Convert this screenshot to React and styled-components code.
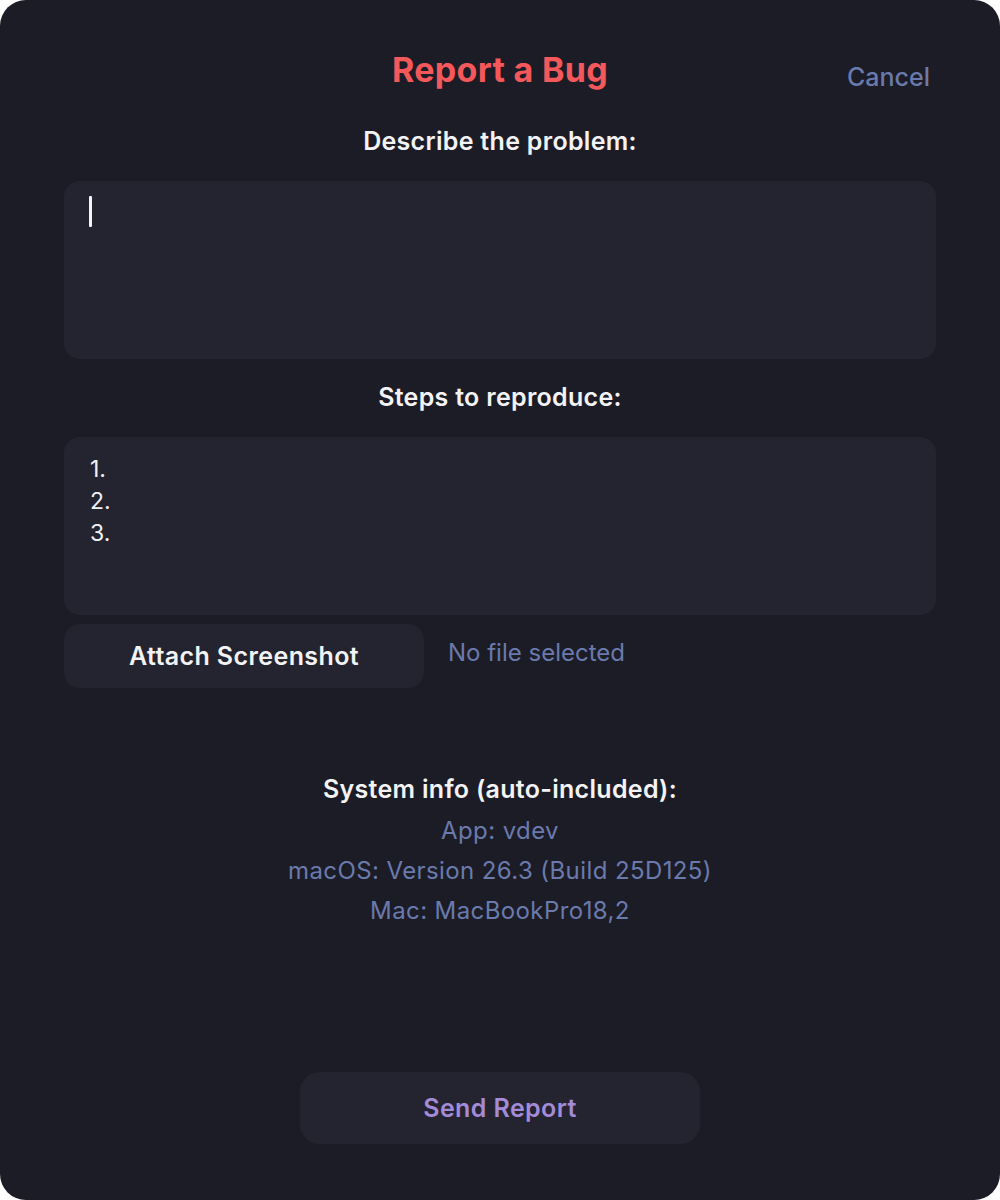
import React from "react";
import styled, { createGlobalStyle } from "styled-components";

const Global = createGlobalStyle`
  html, body { margin: 0; padding: 0; background: #ffffff; }
  body { font-family: Inter, "Noto Sans", "Liberation Sans", sans-serif; }
  * { box-sizing: border-box; }
`;

const Window = styled.div`
  width: 1000px;
  height: 1200px;
  background: #1c1c26;
  border-radius: 26px;
  padding: 48px 64px 0;
  display: flex;
  flex-direction: column;
  overflow: hidden;
`;

const Header = styled.div`
  display: grid;
  grid-template-columns: 1fr auto 1fr;
  align-items: center;
  height: 44px;
`;

const Title = styled.h1`
  grid-column: 2;
  margin: 0;
  font-size: 34px;
  font-weight: 700;
  line-height: 44px;
  color: #f5585b;
  letter-spacing: 0.3px;
`;

const CancelButton = styled.button`
  grid-column: 3;
  justify-self: end;
  margin: 14px 6px 0 0;
  padding: 0;
  border: none;
  background: none;
  font-family: inherit;
  font-size: 25px;
  font-weight: 500;
  color: #6a7aad;
  cursor: pointer;
`;

const Label = styled.div`
  text-align: center;
  font-size: 25px;
  font-weight: 600;
  line-height: 32px;
  letter-spacing: 0.3px;
  color: #f3f3f6;
  margin-top: ${(p) => p.$top}px;
`;

const Field = styled.div`
  margin-top: 24px;
  height: 178px;
  background: #242430;
  border-radius: 16px;
  padding: 16px 26px;
  font-size: 23px;
  line-height: 32px;
  color: #f0f0f4;
  white-space: pre-line;
`;

const Caret = styled.span`
  display: block;
  width: 3px;
  height: 31px;
  margin: -1px 0 0 -1px;
  background: #f4f4f7;
  border-radius: 1px;
`;

const AttachRow = styled.div`
  margin-top: 9px;
  display: flex;
  align-items: center;
  gap: 24px;
`;

const SoftButton = styled.button`
  width: ${(p) => p.$w}px;
  height: ${(p) => p.$h}px;
  border: none;
  border-radius: ${(p) => p.$r}px;
  background: #242430;
  font-family: inherit;
  font-size: 25px;
  font-weight: 600;
  letter-spacing: 0.4px;
  color: ${(p) => p.$color};
  cursor: pointer;
  padding: 0;
`;

const FileNote = styled.span`
  font-size: 24px;
  color: #6a7aad;
  margin-top: -8px;
`;

const InfoBlock = styled.div`
  margin-top: 85px;
  display: flex;
  flex-direction: column;
  align-items: center;
`;

const InfoTitle = styled.div`
  font-size: 25px;
  font-weight: 600;
  line-height: 32px;
  letter-spacing: 0.3px;
  color: #f3f3f6;
  margin-bottom: 6px;
`;

const InfoLine = styled.div`
  font-size: 24px;
  line-height: 40px;
  letter-spacing: 0.4px;
  color: #6a7aad;
`;

const Footer = styled.div`
  margin-top: 141px;
  display: flex;
  justify-content: center;
`;

export default function App() {
  return (
    <>
      <Global />
      <Window>
        <Header>
          <Title>Report a Bug</Title>
          <CancelButton>Cancel</CancelButton>
        </Header>

        <Label $top={33}>Describe the problem:</Label>
        <Field>
          <Caret />
        </Field>

        <Label $top={22}>Steps to reproduce:</Label>
        <Field>{"1.\n2.\n3."}</Field>

        <AttachRow>
          <SoftButton $w={360} $h={64} $r={16} $color="#f3f3f6">
            Attach Screenshot
          </SoftButton>
          <FileNote>No file selected</FileNote>
        </AttachRow>

        <InfoBlock>
          <InfoTitle>System info (auto-included):</InfoTitle>
          <InfoLine>App: vdev</InfoLine>
          <InfoLine>macOS: Version 26.3 (Build 25D125)</InfoLine>
          <InfoLine>Mac: MacBookPro18,2</InfoLine>
        </InfoBlock>

        <Footer>
          <SoftButton $w={400} $h={72} $r={20} $color="#a48bd8">
            Send Report
          </SoftButton>
        </Footer>
      </Window>
    </>
  );
}
